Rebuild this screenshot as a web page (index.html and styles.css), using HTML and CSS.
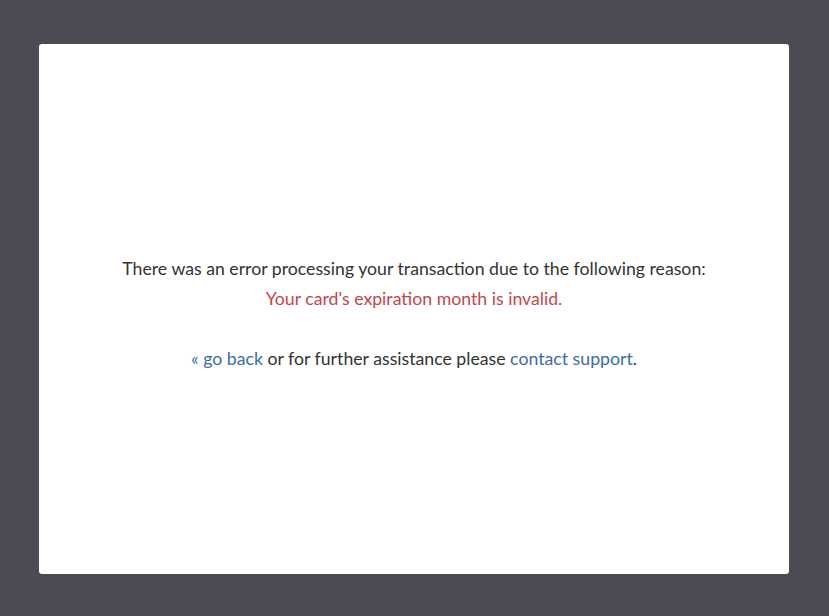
FILE: index.html
```html
<!DOCTYPE html>
<html>
<head>
<meta charset="utf-8">
<link rel="stylesheet" href="styles.css">
</head>
<body>
<div class="page">
  <div class="card">
    <div class="message">
      <p class="line">There was an error processing your transaction due to the following reason:</p>
      <p class="line error">Your card's expiration month is invalid.</p>
      <p class="line actions"><a href="#">« go back</a> or for further assistance please <a href="#">contact support</a>.</p>
    </div>
  </div>
</div>
</body>
</html>
```
FILE: styles.css
```css
html, body {
  margin: 0;
  padding: 0;
  background: #4a4b53;
  height: 100%;
}
.page {
  padding: 44px 0 42px 39px;
  display: flex;
}
.card {
  width: 750px;
  height: 530px;
  background: #fff;
  border-radius: 3px;
  display: flex;
  align-items: center;
  justify-content: center;
  font-family: Lato, "Open Sans", sans-serif;
  font-size: 17.7px;
  color: #333;
}
.message {
  text-align: center;
  padding-top: 10px;
}
.line {
  margin: 0;
  line-height: 30px;
}
.error {
  color: #c2474b;
}
.actions {
  margin-top: 30px;
}
a {
  color: #3a6ea5;
  text-decoration: none;
}
```
